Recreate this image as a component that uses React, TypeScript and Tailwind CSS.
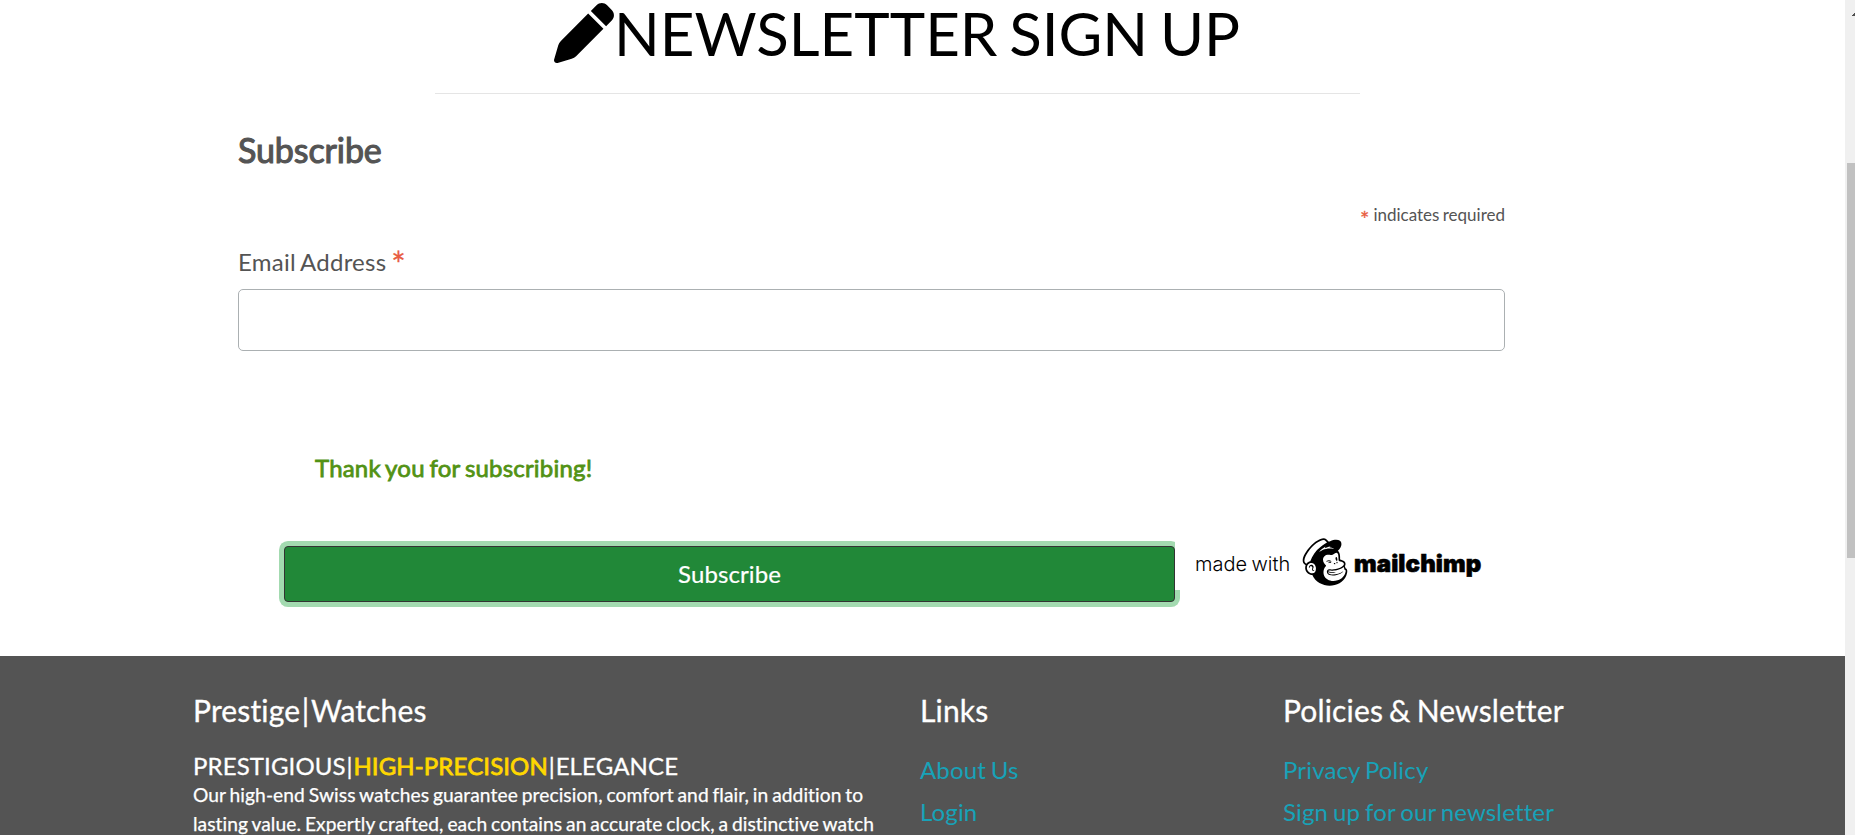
import { FaMailchimp } from "react-icons/fa";

function PenIcon() {
  return (
    <svg viewBox="0 0 512 512" className="size-[60px] shrink-0" fill="currentColor" aria-hidden="true">
      <path d="M362.7 19.3L314.3 67.7 444.3 197.7l48.4-48.4c25-25 25-65.5 0-90.5L453.3 19.3c-25-25-65.5-25-90.5 0zm-71 71L58.6 323.5c-10.4 10.4-18 23.3-22.2 37.4L1 481.2C-1.5 489.7 .8 498.8 7 505s15.3 8.5 23.7 6.1l120.3-35.4c14.1-4.2 27-11.8 37.4-22.2L421.7 220.3 291.7 90.3z" />
    </svg>
  );
}

function MailchimpBadge() {
  return (
    <a className="relative z-10 flex h-[60px] w-[330px] items-center bg-white pl-[20px] pt-[3px] text-black">
      <span className="mt-[5px] w-[103px] whitespace-nowrap font-['Inter'] text-[20px] font-light leading-6">made with</span>
      <FaMailchimp className="size-[54px] shrink-0" />
      <span className="ml-[2px] mt-[4px] whitespace-nowrap font-['Inter'] text-[24px] font-black leading-6 tracking-[0.1px] [-webkit-text-stroke:0.6px_#000]">
        mailchimp
      </span>
    </a>
  );
}

function NewsletterForm() {
  return (
    <form className="ml-[238px] w-[1267px] text-[#545454]">
      <h2 className="mt-[35px] text-[34px] leading-[41px] tracking-[-0.1px] [-webkit-text-stroke:1.1px_#545454]">Subscribe</h2>
      <div className="mt-[35px] flex justify-end gap-[4px] text-[17px] leading-5">
        <span className="pt-[4px] text-[22px] leading-5 text-[#e85c41] [-webkit-text-stroke:0.3px_#e85c41]">*</span>
        <span>indicates required</span>
      </div>
      <label className="mt-[16px] flex h-[33px] gap-[5px] text-[24px] leading-[33px] tracking-[0.25px]">
        Email Address
        <span className="pt-[2px] text-[34px] leading-[33px] text-[#e85c41] [-webkit-text-stroke:0.3px_#e85c41]">*</span>
      </label>
      <input className="mt-[11px] block h-[62px] w-full rounded-[5px] border border-[#abb0b2] bg-white px-4" />
      <div className="ml-[77px] mt-[102px] text-[24px] leading-[29px] tracking-[0.19px] text-[#529214] [-webkit-text-stroke:0.8px_#529214]">
        Thank you for subscribing!
      </div>
      <div className="ml-[46px] mt-[48px] flex h-[72px] items-start">
        <button
          type="button"
          className="mt-[16px] h-[56px] w-[891px] shrink-0 rounded-[4px] border border-[#333] bg-[#218838] text-[24px] tracking-[0.1px] text-white shadow-[0_0_0_5px_#a3dab0] [-webkit-text-stroke:0.2px_#fff]"
        >
          Subscribe
        </button>
        <MailchimpBadge />
      </div>
    </form>
  );
}

function LinkColumn({ title, links }: { title: string; links: string[] }) {
  return (
    <div>
      <h5 className="text-[30px] leading-9 tracking-[0.15px] [-webkit-text-stroke:0.3px_#fff]">{title}</h5>
      <ul className="mt-[21px] text-[24px] leading-[42px] tracking-[0.15px] text-[#17a2b8]">
        {links.map((link) => (
          <li key={link}>{link}</li>
        ))}
      </ul>
    </div>
  );
}

function Footer() {
  return (
    <footer className="mt-[54px] grid h-[179px] grid-cols-[727px_363px_1fr] overflow-hidden bg-[#545454] pl-[193px] pt-[36px] text-white">
      <div className="whitespace-nowrap">
        <h5 className="text-[30px] leading-9 tracking-[0.15px] [-webkit-text-stroke:0.3px_#fff]">
          Prestige<span className="px-[1.5px]">|</span>Watches
        </h5>
        <div className="mt-[23px] text-[24px] leading-[29px] tracking-[0.12px] [-webkit-text-stroke:0.3px_#fff]">
          PRESTIGIOUS<span className="px-[0.8px]">|</span>
          <span className="text-[#ffd700] [-webkit-text-stroke:0.8px_#ffd700]">HIGH-PRECISION</span>
          <span className="px-[0.8px]">|</span>ELEGANCE
        </div>
        <p className="text-[19.2px] leading-[29px] tracking-[0.08px] [-webkit-text-stroke:0.25px_#fff]">
          Our high-end Swiss watches guarantee precision, comfort and flair, in addition to
          <br />
          lasting value. Expertly crafted, each contains an accurate clock, a distinctive watch
        </p>
      </div>
      <LinkColumn title="Links" links={["About Us", "Login"]} />
      <LinkColumn title="Policies & Newsletter" links={["Privacy Policy", "Sign up for our newsletter"]} />
    </footer>
  );
}

function Scrollbar() {
  return (
    <div className="flex h-[835px] w-[10px] shrink-0 flex-col items-end overflow-hidden bg-[#f0f0f0]">
      <svg viewBox="0 0 3 3" className="mt-[13px] h-[3px] w-[3px] shrink-0" shapeRendering="crispEdges" aria-hidden="true">
        <path d="M2 0h1v3H0V2h1V1h1z" fill="#505050" />
      </svg>
      <div className="mt-[147px] h-[395px] w-[8px] shrink-0 bg-[#c1c1c1]" />
    </div>
  );
}

export default function App() {
  return (
    <div className="flex h-[835px] w-[1855px] overflow-hidden bg-white font-['Lato',sans-serif] [font-variant-ligatures:none]">
      <main className="h-[835px] w-[1845px] shrink-0 overflow-hidden [&_*]:[word-spacing:-0.06em]">
        <header className="flex h-[93px] pl-[554px] text-black">
          <div className="pt-[3px]">
            <PenIcon />
          </div>
          <h1 className="whitespace-nowrap text-[60px] leading-[66px]">NEWSLETTER SIGN UP</h1>
        </header>
        <hr className="ml-[435px] w-[925px] border-t border-[#e5e5e5]" />
        <NewsletterForm />
        <Footer />
      </main>
      <Scrollbar />
    </div>
  );
}
